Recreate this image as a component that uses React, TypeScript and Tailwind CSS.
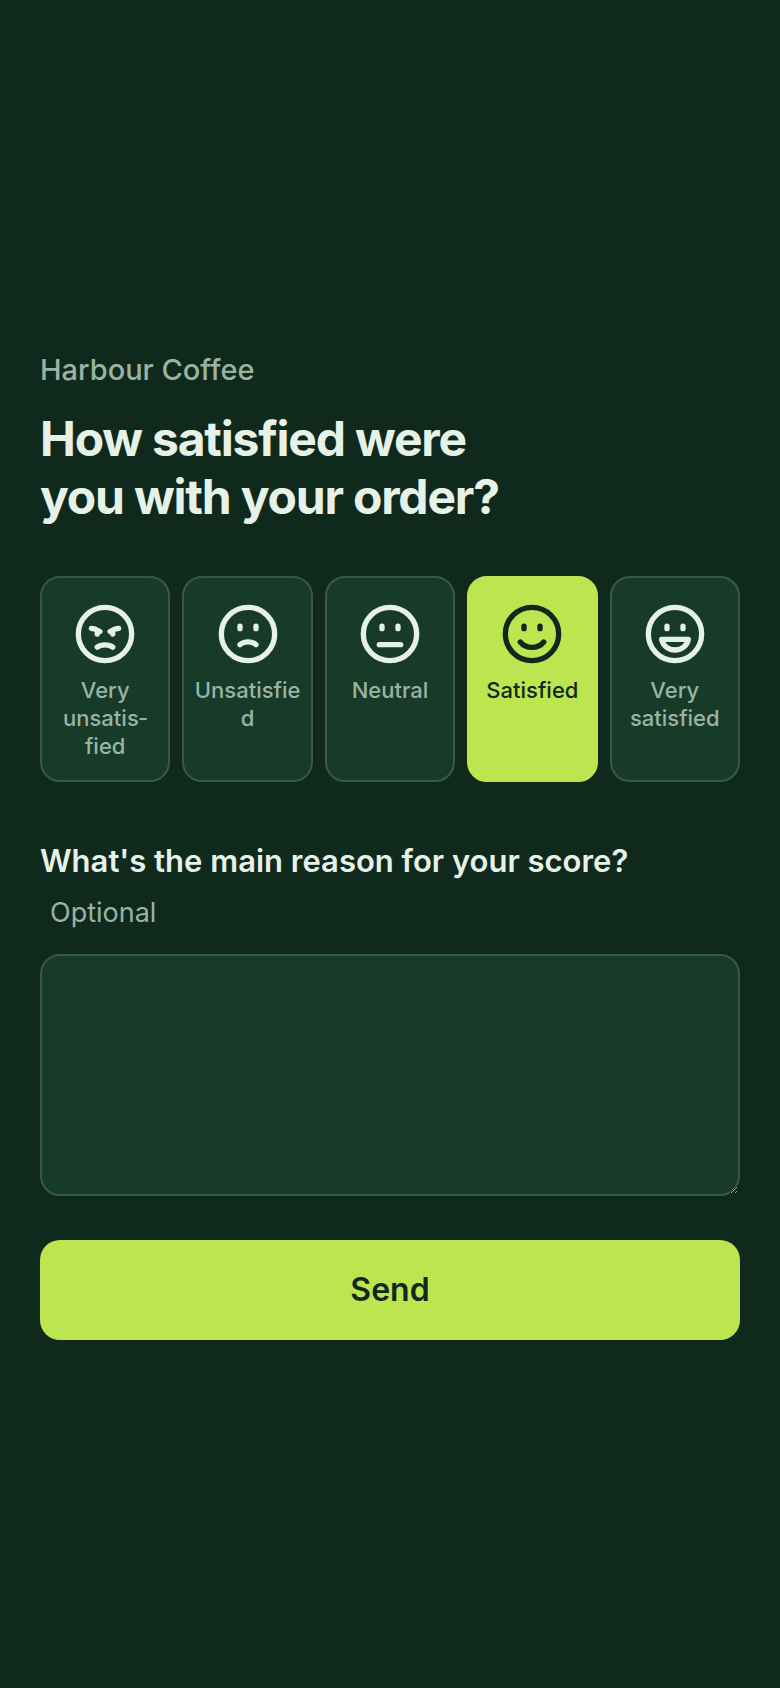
import { useState, type ReactNode } from "react";

type Choice = { id: string; label: string; face: ReactNode };

const eyes = <path d="M9 9.1v.9M15 9.1v.9" />;

const choices: Choice[] = [
  {
    id: "very-unsatisfied",
    label: "Very unsatis\u00ADfied",
    face: (
      <>
        <path d="M6.9 9.9l1.4.3 1.8.9-1 .1v.8M17.1 9.9l-1.4.3-1.8.9 1 .1v.8" />
        <path d="M9.1 16.9C10.5 15.8 13.5 15.8 14.9 16.9" />
      </>
    ),
  },
  {
    id: "unsatisfied",
    label: "Unsatisfied",
    face: (
      <>
        {eyes}
        <path d="M9 16C10.5 14.6 13.5 14.6 15 16" />
      </>
    ),
  },
  {
    id: "neutral",
    label: "Neutral",
    face: (
      <>
        {eyes}
        <path d="M8 16h8" />
      </>
    ),
  },
  {
    id: "satisfied",
    label: "Satisfied",
    face: (
      <>
        {eyes}
        <path d="M7.6 15C9.8 17.7 14.2 17.7 16.4 15" />
      </>
    ),
  },
  {
    id: "very-satisfied",
    label: "Very satisfied",
    face: (
      <>
        {eyes}
        <path d="M7 14h10c-.4 2.3-2.4 4-5 4s-4.6-1.7-5-4z" />
      </>
    ),
  },
];

export default function App() {
  const [score, setScore] = useState("satisfied");

  return (
    <main className="flex min-h-screen flex-col justify-center bg-[#10291d] px-10 font-['Inter',sans-serif] text-[#e6f1e8]">
      <form className="flex flex-col" onSubmit={(e) => e.preventDefault()}>
        <p className="text-[29px] leading-[44px] font-medium text-[#98b4a5]">Harbour Coffee</p>
        <h1 className="mt-[18px] text-[48px] leading-[58px] font-bold tracking-tight">
          How satisfied were
          <br />
          you with your order?
        </h1>

        <div role="radiogroup" aria-label="Satisfaction" className="mt-[50px] grid grid-cols-5 gap-3">
          {choices.map((c) => (
            <label
              key={c.id}
              className="flex min-w-0 cursor-pointer flex-col items-center gap-[10px] rounded-[20px] border-2 border-[#385947] bg-[#183a28] px-2 pt-6 pb-5 has-checked:border-[#bde550] has-checked:bg-[#bde550] has-checked:text-[#10291d]"
            >
              <input
                type="radio"
                name="score"
                value={c.id}
                checked={score === c.id}
                onChange={() => setScore(c.id)}
                className="peer sr-only"
              />
              <svg
                viewBox="0 0 24 24"
                className="size-16 shrink-0"
                fill="none"
                stroke="currentColor"
                strokeWidth="2"
                strokeLinecap="round"
                strokeLinejoin="round"
                aria-hidden="true"
              >
                <circle cx="12" cy="12" r="10" />
                {c.face}
              </svg>
              <span className="w-full text-center text-[22px] leading-7 font-medium wrap-anywhere text-[#98b4a5] peer-checked:text-[#10291d]">
                {c.label}
              </span>
            </label>
          ))}
        </div>

        <label htmlFor="reason" className="mt-[57px] flex flex-col">
          <span className="text-[31px] leading-[44px] font-semibold">What's the main reason for your score?</span>
          <span className="mt-[10px] ml-[10px] text-[27px] leading-10 text-[#98b4a5]">Optional</span>
        </label>
        <textarea
          id="reason"
          className="mt-[21px] h-[242px] w-full resize-y rounded-[20px] border-2 border-[#385947] bg-[#183a28] p-5 text-[28px] outline-none"
        />

        <button
          type="submit"
          className="mt-11 h-[100px] w-full cursor-pointer rounded-[20px] bg-[#bde550] text-[32px] font-semibold text-[#10291d]"
        >
          Send
        </button>
      </form>
    </main>
  );
}
